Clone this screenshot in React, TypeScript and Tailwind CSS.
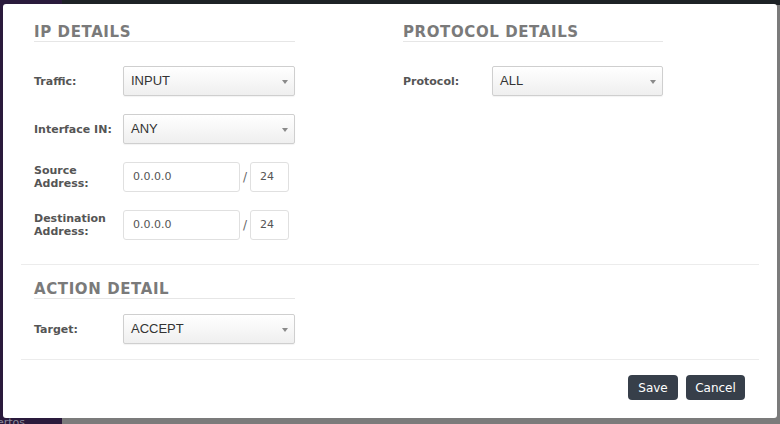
const label = "w-[89px] shrink-0 text-[11px] font-bold leading-[13px] text-[#555] font-['DejaVu_Sans',sans-serif]";

function Heading({ children }: { children: string }) {
  return (
    <h2 className="border-b border-[#e6e6e6] pt-[2px] text-[15px] font-bold leading-[17px] tracking-[0.6px] text-[#7a7a7a] font-['DejaVu_Sans',sans-serif]">
      {children}
    </h2>
  );
}

function Select({ value }: { value: string }) {
  return (
    <div className="flex h-[30px] w-[172px] items-center justify-between rounded-[2px] border border-[#cfcfcf] bg-gradient-to-b from-white to-[#efefef] pl-[7px] pr-[6px] shadow-[0_1px_1px_rgba(0,0,0,0.05)]">
      <span className="text-[13px] text-[#333] font-['Liberation_Sans',sans-serif]">{value}</span>
      <svg width="6" height="4" viewBox="0 0 6 4" className="mt-[2px]">
        <path d="M0 0 L6 0 L3 4 Z" fill="#8a8a8a" />
      </svg>
    </div>
  );
}

function Input({ value, w }: { value: string; w: string }) {
  return (
    <div className={`flex h-[30px] ${w} items-center rounded-[3px] border border-[#e0e0e0] bg-white pl-[9px]`}>
      <span className="text-[11px] text-[#555] font-['DejaVu_Sans',sans-serif]">{value}</span>
    </div>
  );
}

function Row({ name, children }: { name: React.ReactNode; children: React.ReactNode }) {
  return (
    <div className="flex h-[30px] items-center">
      <div className={label}>{name}</div>
      {children}
    </div>
  );
}

function Address({ name }: { name: React.ReactNode }) {
  return (
    <Row name={name}>
      <Input value="0.0.0.0" w="w-[117px]" />
      <span className="mx-[3px] text-[12px] text-[#666] font-['DejaVu_Sans',sans-serif]">/</span>
      <Input value="24" w="w-[39px]" />
    </Row>
  );
}

export default function App() {
  return (
    <div className="relative h-[424px] w-[780px] overflow-hidden bg-[#7b7b7b]">
      <div className="absolute left-0 top-0 h-[5px] w-full bg-[#1d2226]" />
      <div className="absolute left-0 top-0 h-full w-[62px] bg-[#2a1a3c]">
        <span className="absolute bottom-[-5px] left-[-3px] text-[11px] leading-[13px] text-[#8a8a9a] font-['DejaVu_Sans',sans-serif]">ertos</span>
      </div>
      <div className="absolute left-[3px] top-[4px] flex h-[414px] w-[774px] flex-col rounded-[3px] bg-white px-[18px] pt-[18px]">
        <div className="flex gap-[108px] px-[13px]">
          <div className="w-[261px]">
            <Heading>IP DETAILS</Heading>
            <div className="mt-[24px] flex flex-col gap-[18px]">
              <Row name="Traffic:">
                <Select value="INPUT" />
              </Row>
              <Row name="Interface IN:">
                <Select value="ANY" />
              </Row>
              <Address name={<>Source<br />Address:</>} />
              <Address name={<>Destination<br />Address:</>} />
            </div>
          </div>
          <div className="w-[260px]">
            <Heading>PROTOCOL DETAILS</Heading>
            <div className="mt-[24px]">
              <Row name="Protocol:">
                <Select value="ALL" />
              </Row>
            </div>
          </div>
        </div>
        <div className="mt-[24px] border-t border-[#ececec]" />
        <div className="w-[287px] px-[13px] pt-[14px]">
          <Heading>ACTION DETAIL</Heading>
          <div className="mt-[15px]">
            <Row name="Target:">
              <Select value="ACCEPT" />
            </Row>
          </div>
        </div>
        <div className="mt-[15px] border-t border-[#ececec]" />
        <div className="flex justify-end gap-[8px] pr-[14px] pt-[15px]">
          <button className="h-[25px] w-[50px] rounded-[4px] bg-[#373f4a] text-[12px] text-white font-['DejaVu_Sans',sans-serif]">Save</button>
          <button className="h-[25px] w-[59px] rounded-[4px] bg-[#373f4a] text-[12px] text-white font-['DejaVu_Sans',sans-serif]">Cancel</button>
        </div>
      </div>
    </div>
  );
}
